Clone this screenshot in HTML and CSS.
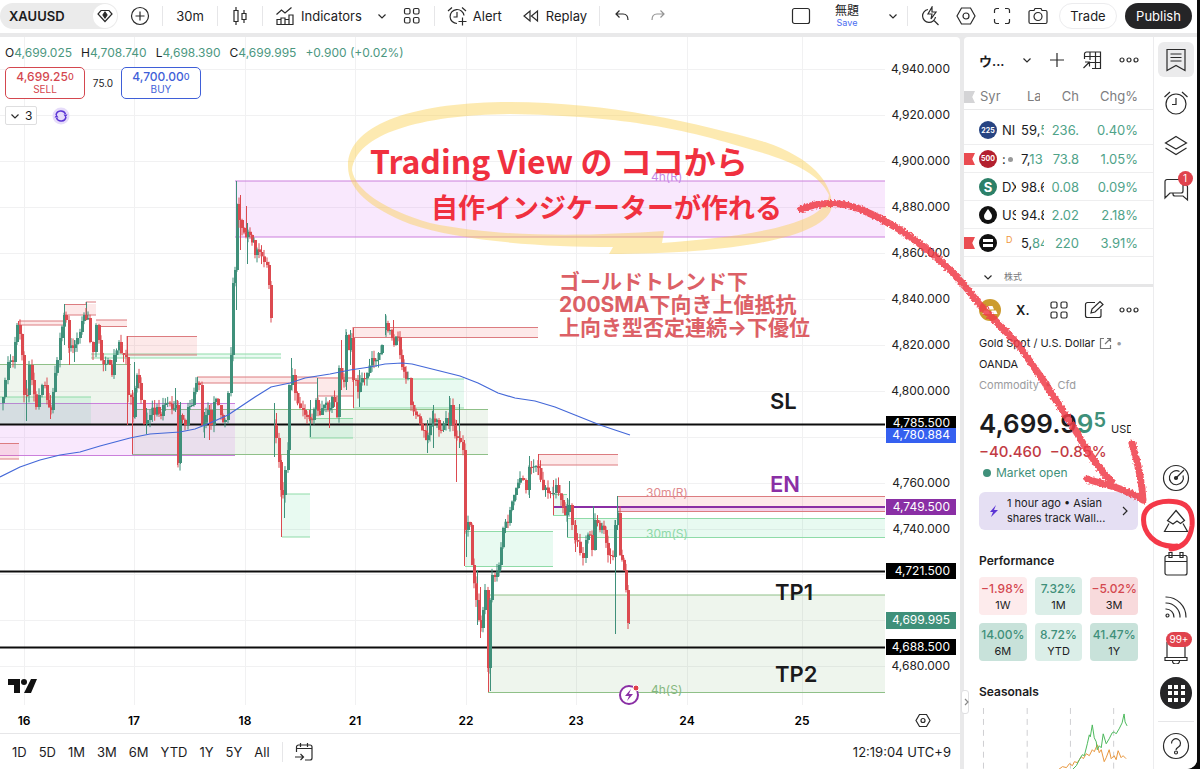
FILE: index.html
```html
<!DOCTYPE html>
<html lang="en">
<head>
    <meta charset="UTF-8">
    <meta name="viewport" content="width=device-width, initial-scale=1.0">
    <title>XAUUSD 4,699.995</title>
    <link rel="stylesheet" href="styles.css">
</head>
<body>
<div class="app">
    <header class="toolbar">
        <div class="symbol">
            <button class="symbol-name">XAUUSD</button>
            <button class="symbol-badge" aria-label="Plan">
                <svg class="icon" width="18" height="18" viewBox="0 0 18 18"><path d="M5 3.500h8l3 3.500-7 7.500L2 7z"/><path d="M9 5l2 3-2 3-2-3z" fill="#2a2a2a"/></svg>
            </button>
        </div>
        <button class="tool add" aria-label="Compare">
            <svg class="icon" width="20" height="20" viewBox="0 0 20 20"><circle cx="10" cy="10" r="8.500"/><path d="M10 5.500v9M5.500 10h9"/></svg>
        </button>
        <span class="sep"></span>
        <button class="tool interval">30m</button>
        <span class="sep"></span>
        <button class="tool style" aria-label="Candles">
            <svg class="icon" width="16" height="20" viewBox="0 0 16 20"><path d="M2 4.500h4v11H2zM4 1v3.500M4 15.500V19M10 7.500h4v6h-4zM12 4v3.500M12 13.500V17"/></svg>
        </button>
        <span class="sep"></span>
        <button class="tool indicators">
            <svg class="icon" width="20" height="20" viewBox="0 0 20 20"><path d="M2 18.500v-5h4v5zM6 18.500V12h4v6.500zM10 18.500v-5h4v5zM14 18.500V9h4v9.500zM1.500 8.500l5-4.500 3.500 3 6.500-5.500"/></svg>
            Indicators
        </button>
        <button class="tool chev" aria-label="Favorites">
            <svg class="icon" width="10" height="10" viewBox="0 0 10 10"><path d="M1.500 3.500L5 7l3.500-3.500"/></svg>
        </button>
        <button class="tool layouts" aria-label="Templates">
            <svg class="icon" width="18" height="18" viewBox="0 0 18 18"><rect x="1.500" y="1.500" width="5.500" height="5.500" rx="1.500"/><rect x="10.500" y="1.500" width="5.500" height="5.500" rx="1.500"/><rect x="1.500" y="10.500" width="5.500" height="5.500" rx="1.500"/><rect x="10.500" y="10.500" width="5.500" height="5.500" rx="1.500"/></svg>
        </button>
        <span class="sep"></span>
        <button class="tool alert">
            <svg class="icon" width="20" height="20" viewBox="0 0 20 20"><path d="M17 9.500A7 7 0 1 0 10 17.500M10 6v5H6.500M1 5l4-3.500M19 5l-4-3.500M15.500 11.500v8M11.500 15.500h8"/></svg>
            Alert
        </button>
        <button class="tool replay">
            <svg class="icon" width="18" height="18" viewBox="0 0 18 18"><path d="M8 4v10L2 9zM15.500 4v10l-6-5z"/></svg>
            Replay
        </button>
        <span class="sep"></span>
        <button class="tool undo" aria-label="Undo">
            <svg class="icon" width="16" height="16" viewBox="0 0 16 16"><path d="M5.500 2.500L2 6l3.500 3.500M2 6h7c3 0 5 2 5 6"/></svg>
        </button>
        <button class="tool redo" aria-label="Redo">
            <svg class="icon" width="16" height="16" viewBox="0 0 16 16"><path d="M10.500 2.500L14 6l-3.500 3.500M14 6H7c-3 0-5 2-5 6"/></svg>
        </button>
        <div class="toolbar-right">
            <button class="tool" aria-label="Layout setup">
                <svg class="icon" width="20" height="20" viewBox="0 0 20 20"><rect x="1.500" y="2.500" width="17" height="15" rx="2"/></svg>
            </button>
            <button class="save"><span class="save-name">無題</span><span class="save-link">Save</span></button>
            <button class="tool manage" aria-label="Manage layouts">
                <svg class="icon" width="10" height="10" viewBox="0 0 10 10"><path d="M1.500 3.500L5 7l3.500-3.500"/></svg>
            </button>
            <span class="sep"></span>
            <button class="tool quick" aria-label="Quick search">
                <svg class="icon" width="20" height="20" viewBox="0 0 20 20"><path d="M8 3.500A6.500 6.500 0 1 0 15.500 11M13.500 14l5 5M12 1L8 8h4l-1 5 5-7h-4z"/></svg>
            </button>
            <button class="tool" aria-label="Settings">
                <svg class="icon" width="20" height="20" viewBox="0 0 20 20"><path d="M5.500 2h9l4.500 8-4.500 8h-9L1 10z"/><circle cx="10" cy="10" r="3"/></svg>
            </button>
            <button class="tool" aria-label="Fullscreen">
                <svg class="icon" width="20" height="20" viewBox="0 0 20 20"><path d="M2.500 7V4.500a2 2 0 0 1 2-2H7M13 2.500h2.500a2 2 0 0 1 2 2V7M17.500 13v2.500a2 2 0 0 1-2 2H13M7 17.500H4.500a2 2 0 0 1-2-2V13"/></svg>
            </button>
            <button class="tool" aria-label="Snapshot">
                <svg class="icon" width="20" height="20" viewBox="0 0 20 20"><path d="M2.500 4.500H6l1-2h6l1 2h3.500a1.500 1.500 0 0 1 1.500 1.500v10a1.500 1.500 0 0 1-1.500 1.500h-15A1.500 1.500 0 0 1 1 16V6a1.500 1.500 0 0 1 1.500-1.500z"/><circle cx="10" cy="10.500" r="4"/></svg>
            </button>
            <button class="trade">Trade</button>
            <button class="publish">Publish</button>
        </div>
    </header>

    <main class="workspace">
        <section class="chart-area">
            <div class="chart">
                <svg class="plot" viewBox="0 37 960 696" preserveAspectRatio="xMinYMin meet">
                    <g id="grid" class="grid"></g>
                    <!-- support / resistance zones -->
                    <g class="zone olive">
                        <rect x="0" y="364" width="131" height="60"/><path d="M0 364.500h131"/>
                        <rect x="132" y="409" width="356" height="45"/><path d="M132 409.500h356M132 454.500h356M132.500 409v45"/>
                        <rect x="488" y="595" width="397" height="97"/><path d="M488 595h397M488 692.500h397"/>
                    </g>
                    <g class="zone violet">
                        <rect x="0" y="403" width="235" height="52"/><path d="M0 403.500h235M0 455.500h235"/>
                        <rect x="235" y="181" width="650" height="56"/><path d="M235 181h650M235 237h650"/>
                    </g>
                    <g class="zone green">
                        <rect x="0" y="397" width="91" height="27"/><path d="M0 397h91"/>
                        <rect x="91" y="354" width="190" height="4"/><path d="M91 354h190M91 358h190"/>
                        <rect x="282" y="494" width="28" height="43"/><path d="M282 494h28M282 537h28"/>
                        <rect x="310" y="418" width="43" height="20"/><path d="M310 418.500h43M310 438h43M310 418v20"/>
                        <rect x="353" y="379" width="111" height="29"/><path d="M353 379h111M353 408h111"/>
                        <rect x="465" y="531" width="88" height="35"/><path d="M465 531.500h88M465 566.500h88"/>
                        <rect x="553" y="494" width="14" height="21"/><path d="M553 494.500h14M553 515.500h14"/>
                        <rect x="567" y="518" width="318" height="19"/><path d="M567 518.500h318M567 537.500h318"/>
                    </g>
                    <g class="zone red">
                        <rect x="19" y="321" width="45" height="4"/><path d="M19 321h45M19 325h45"/>
                        <rect x="64" y="304" width="32" height="11"/><path d="M64 304.500h22V302h10M64 315h32"/>
                        <rect x="96" y="320" width="31" height="6"/><path d="M96 320h31M96 326.500h31"/>
                        <rect x="127" y="336" width="70" height="19"/><path d="M127 336.500h70M127 355h70M127 336v19"/>
                        <rect x="0" y="443" width="19" height="16"/><path d="M0 443.500h19M0 459h19"/>
                        <rect x="197" y="377" width="120" height="6"/><path d="M197 377h120M197 383h120"/>
                        <rect x="317" y="377" width="36" height="19"/><path d="M317 378h36M317 396h36"/>
                        <rect x="353" y="327" width="185" height="10"/><path d="M353 327.500h185M353 337.500h185M353 327v10"/>
                        <rect x="538" y="454" width="80" height="11"/><path d="M538 454.500h80M538 465h80"/>
                        <rect x="617" y="496" width="268" height="16"/><path d="M617 496.500h268M617 511.500h268"/>
                    </g>
                    <path class="level" d="M0 424.500h885M0 571.500h885M0 647.500h885"/>
                    <path class="entry-fill" d="M618 507h267v4H618z"/>
                    <path class="entry" d="M553 507h332"/>
                    <g id="candles"></g>
                    <polyline class="sma" points="0,477 20,467 40,460 60,455 80,452 100,446 130,438 150,434 180,432 195,429 210,423 228,415 240,407 255,397 271,387 290,383 305,378 330,374 350,370 370,367 385,364 402,363 412,364 440,371 460,376 478,383 498,393 515,398 535,401 555,407 580,417 600,425 618,431 630,435"/>
                    <g class="zone-label">
                        <text class="t-violet" x="651" y="181">4h(R)</text>
                        <text class="t-red" x="646" y="497">30m(R)</text>
                        <text class="t-green" x="646" y="538">30m(S)</text>
                        <text class="t-olive" x="651" y="694">4h(S)</text>
                    </g>
                    <g class="mark">
                        <text x="770" y="409">SL</text>
                        <text class="t-entry" x="770" y="492">EN</text>
                        <text x="775" y="600">TP1</text>
                        <text x="775" y="682">TP2</text>
                    </g>
                    <g class="memo">
                        <text x="559" y="289">ゴールドトレンド下</text>
                        <text x="559" y="312">200SMA下向き上値抵抗</text>
                        <text x="559" y="335">上向き型否定連続→下優位</text>
                    </g>
                    <g class="event">
                        <circle cx="629" cy="695" r="9"/>
                        <path d="M631 689l-6 7h4l-2 5 6-7h-4z"/>
                        <circle class="event-dot" cx="636" cy="688" r="3"/>
                    </g>
                    <path class="tv-logo" d="M8 679h12v14h-6v-8H8zM31 679h6l-6 14h-7z"/>
                    <circle class="tv-logo" cx="24" cy="682" r="3"/>
                    <g id="prices" class="axis"></g>
                    <g class="price-tag">
                        <rect class="f-black" x="886" y="416" width="70" height="16"/><text x="950" y="427">4,785.500</text>
                        <rect class="f-blue" x="886" y="428" width="70" height="15"/><text x="950" y="439">4,780.884</text>
                        <rect class="f-purple" x="886" y="499" width="70" height="16"/><text x="950" y="511">4,749.500</text>
                        <rect class="f-black" x="886" y="563" width="70" height="16"/><text x="950" y="575">4,721.500</text>
                        <rect class="f-green" x="886" y="612" width="70" height="17"/><text x="950" y="624">4,699.995</text>
                        <rect class="f-black" x="886" y="639" width="70" height="16"/><text x="950" y="651">4,688.500</text>
                    </g>
                    <g id="days" class="days"></g>
                    <g class="axis-gear"><path d="M919.500 714.500h7l3.500 6-3.500 6h-7l-3.500-6z"/><circle cx="923" cy="720.500" r="2"/></g>
                </svg>
                <div class="legend">
                    <div class="ohlc">
                        <span>O<b>4,699.025</b></span><span>H<b>4,708.740</b></span><span>L<b>4,698.390</b></span><span>C<b>4,699.995</b></span><b>+0.900 (+0.02%)</b>
                    </div>
                    <div class="order">
                        <button class="sell"><strong>4,699.25<small>0</small></strong>SELL</button>
                        <span class="spread">75.0</span>
                        <button class="buy"><strong>4,700.00<small>0</small></strong>BUY</button>
                    </div>
                    <div class="studies">
                        <button class="study-count"><svg class="icon" width="10" height="10" viewBox="0 0 10 10"><path d="M1.500 3.500L5 7l3.500-3.500"/></svg>3</button>
                        <svg class="sync" width="18" height="18" viewBox="0 0 18 18"><circle class="sync-bg" cx="9" cy="9" r="8.500"/><path d="M4 8a5 5 0 0 1 9.500-1M14 10a5 5 0 0 1-9.500 1"/><path class="sync-tip" d="M11.500 7.500h4l-2 3zM6.500 10.500h-4l2-3z"/></svg>
                    </div>
                </div>
            </div>
            <footer class="ranges">
                <button>1D</button><button>5D</button><button>1M</button><button>3M</button><button>6M</button><button>YTD</button><button>1Y</button><button>5Y</button><button>All</button>
                <span class="sep"></span>
                <button class="goto" aria-label="Go to date">
                    <svg class="icon" width="20" height="20" viewBox="0 0 20 20"><path d="M2.500 10V5a2 2 0 0 1 2-2h11.500a2 2 0 0 1 2 2v11a2 2 0 0 1-2 2H11M2.500 6.500H18M6.500 1v4M13.500 1v4M1 15h8M6.500 12l3 3-3 3"/></svg>
                </button>
                <button class="clock">12:19:04 UTC+9</button>
            </footer>
        </section>

        <aside class="panel">
            <button class="collapse" aria-label="Collapse"><svg class="icon" width="5" height="8" viewBox="0 0 5 8"><path d="M1 1l3 3-3 3"/></svg></button>
            <div class="panel-head watch-head">
                <button class="list-name">ウ...</button>
                <button aria-label="Lists"><svg class="icon" width="10" height="10" viewBox="0 0 10 10"><path d="M1.500 3.500L5 7l3.500-3.500"/></svg></button>
                <button aria-label="Add symbol"><svg class="icon" width="16" height="16" viewBox="0 0 16 16"><path d="M8 1v14M1 8h14"/></svg></button>
                <button aria-label="Advanced view"><svg class="icon" width="20" height="20" viewBox="0 0 20 20"><path d="M2.500 9V4a2 2 0 0 1 2-2h14v16.500H10M2.500 6.500h16M8 2v8M13.500 2v16.500M8 12.500h10.500M1.500 18l6-6M3 12h4.500v4.500"/></svg></button>
                <button aria-label="More"><svg class="icon" width="20" height="8" viewBox="0 0 20 8"><circle cx="3" cy="4" r="2"/><circle cx="10" cy="4" r="2"/><circle cx="17" cy="4" r="2"/></svg></button>
            </div>
            <table class="watchlist">
                <colgroup><col class="c-logo"><col class="c-sym"><col class="c-last"><col class="c-chg"><col></colgroup>
                <thead>
                    <tr><th colspan="2"><i class="flag"></i><span class="h-sym">Syr</span></th><th><span class="h-last">La</span></th><th class="num">Ch</th><th class="num">Chg%</th></tr>
                </thead>
                <tbody>
                    <tr><td><span class="logo navy">225</span></td><td>NI</td><td>59,<em>5</em></td><td class="num up">236.</td><td class="num up">0.40%</td></tr>
                    <tr><td><i class="flag"></i><span class="logo crimson">500</span></td><td>:<i class="dot"></i></td><td>7,<em>13</em></td><td class="num up">73.8</td><td class="num up">1.05%</td></tr>
                    <tr><td><span class="logo teal">S</span></td><td>DX</td><td>98.6</td><td class="num up">0.08</td><td class="num up">0.09%</td></tr>
                    <tr><td><span class="logo black"><svg width="8" height="11" viewBox="0 0 8 11"><path d="M4 0c2 3 4 5 4 7a4 4 0 0 1-8 0c0-2 2-4 4-7z"/></svg></span></td><td>US</td><td>94.8</td><td class="num up">2.02</td><td class="num up">2.18%</td></tr>
                    <tr><td><i class="flag"></i><span class="logo black"><svg width="10" height="8" viewBox="0 0 10 8"><path d="M0 0h10v3H0zM0 5h10v3H0z"/></svg></span></td><td><sup>D</sup></td><td>5,<em>84</em></td><td class="num up">220</td><td class="num up">3.91%</td></tr>
                </tbody>
            </table>
            <button class="group"><svg class="icon" width="10" height="10" viewBox="0 0 10 10"><path d="M1.500 3.500L5 7l3.500-3.500"/></svg>株式</button>

            <div class="details">
                <div class="panel-head detail-head">
                    <svg width="22" height="22" viewBox="0 0 22 22"><circle cx="11" cy="11" r="11" fill="#cc9c2f"/><path d="M8.500 7h5l1.500 3.500H7zM5 11.500h4.500L11 15H3.500zM12.500 11.500H17l1.500 3.500h-7z" fill="#fff"/></svg>
                    <button class="ticker">X.</button>
                    <button aria-label="Widgets"><svg class="icon" width="20" height="20" viewBox="0 0 20 20"><rect x="2" y="2" width="6" height="6" rx="1.500"/><rect x="12" y="2" width="6" height="6" rx="1.500"/><rect x="2" y="12" width="6" height="6" rx="1.500"/><rect x="12" y="12" width="6" height="6" rx="1.500"/></svg></button>
                    <button aria-label="Note"><svg class="icon" width="20" height="20" viewBox="0 0 20 20"><path d="M11 2.500H3.500a2 2 0 0 0-2 2v11a2 2 0 0 0 2 2h11.500a2 2 0 0 0 2-2V9M7 13l1-4 8-7.500 3 3-8 7.500z"/></svg></button>
                    <button aria-label="More"><svg class="icon" width="20" height="8" viewBox="0 0 20 8"><circle cx="3" cy="4" r="2"/><circle cx="10" cy="4" r="2"/><circle cx="17" cy="4" r="2"/></svg></button>
                </div>
                <p class="name">Gold Spot / U.S. Dollar <a href="#" aria-label="Open symbol"><svg class="icon" width="13" height="13" viewBox="0 0 13 13"><path d="M5 1.500H1.500v10h10V8M8 1.500h3.500V5M11.500 1.500L6 7"/></svg></a> <span class="muted">•</span></p>
                <p class="name">OANDA</p>
                <p class="name muted">Commodity&nbsp; • &nbsp;Cfd</p>
                <div class="quote">4,699.9<span class="tick">9<small>5</small></span><span class="cur">USD</span></div>
                <div class="change"><span>−40.460</span><span>−0.85%</span></div>
                <div class="status">Market open</div>
                <a class="news" href="#">
                    <svg width="10" height="12" viewBox="0 0 10 12"><path d="M7 0L1 7h3L2 12l7-7H5z"/></svg>
                    <span>1 hour ago • Asian shares track Wall...</span>
                    <svg class="icon" width="6" height="10" viewBox="0 0 6 10"><path d="M1 1l4 4-4 4"/></svg>
                </a>
                <h3>Performance</h3>
                <div class="perf">
                    <div class="loss"><b>−1.98%</b>1W</div>
                    <div class="gain"><b>7.32%</b>1M</div>
                    <div class="loss deep"><b>−5.02%</b>3M</div>
                    <div class="gain deep"><b>14.00%</b>6M</div>
                    <div class="gain"><b>8.72%</b>YTD</div>
                    <div class="gain deep"><b>41.47%</b>1Y</div>
                </div>
                <h3 class="seasonal-title">Seasonals</h3>
                <svg class="seasonals" viewBox="0 0 160 64">
                    <path class="dash" d="M4.500 0v64M48.500 0v64M92 0v64M135.500 0v64"/>
                    <polyline class="s-orange" points="80,62 84,59 88,60 91,56 94,58 96,54 99,55 103,49 105,51 108,46 111,48 114,42 116,44 119,37 121,45 123,42 126,54 128,50 131,42 133,51 136,48 138,52 140,43 143,50 145,48 148,51"/>
                    <polyline class="s-green" points="94,62 98,58 101,52 104,47 106,48 109,36 111,27 112,29 114,17 116,30 118,34 119,42 121,38 123,40 125,26 128,36 131,31 134,25 136,24 138,26 141,21 144,15 146,6 147,14 149,18"/>
                </svg>
            </div>
        </aside>

        <nav class="rail">
            <button class="active" aria-label="Watchlist"><svg class="icon" width="22" height="24" viewBox="0 0 22 24"><path d="M2 1.500h18v21l-9-5-9 5zM5.500 6h11M5.500 9.500h11M5.500 13h11"/></svg></button>
            <button aria-label="Alerts"><svg class="icon" width="26" height="26" viewBox="0 0 26 26"><circle cx="13" cy="14" r="10"/><path d="M13 8v6.500H9M1.500 7L7 2M24.500 7L19 2"/></svg></button>
            <button aria-label="Object tree"><svg class="icon" width="24" height="22" viewBox="0 0 24 22"><path d="M12 1.500l10.500 6.500L12 14 1.500 8zM1.500 13L12 19.500 22.500 13"/></svg></button>
            <button aria-label="Chats"><svg class="icon" width="26" height="26" viewBox="0 0 26 26"><path d="M4 3.500h14a2 2 0 0 1 2 2V15a2 2 0 0 1-2 2H7l-5 5V5.500a2 2 0 0 1 2-2zM10 17v1a2 2 0 0 0 2 2h8l4.500 4V11a2 2 0 0 0-2-2H20"/></svg><span class="badge">1</span></button>
            <span class="spacer"></span>
            <button aria-label="Screeners"><svg class="icon" width="28" height="28" viewBox="0 0 28 28"><circle cx="14" cy="14" r="12.500"/><path d="M17.500 7.500a7 7 0 1 0 3.500 4M22 6l-8 8"/><circle cx="14" cy="14" r="1.500" fill="#2a2a2a"/></svg></button>
            <button aria-label="Pine editor"><svg class="icon" width="26" height="26" viewBox="0 0 26 26"><path d="M13 2.500l8.500 10-4 3-3.500-2.500-4 3-5.500-3.500zM6 15.500L1.500 23.500h23L20 15.500"/></svg></button>
            <button aria-label="Calendar"><svg class="icon" width="26" height="26" viewBox="0 0 26 26"><path d="M4 4.500h18a2 2 0 0 1 2 2V22a2 2 0 0 1-2 2H4a2 2 0 0 1-2-2V6.500a2 2 0 0 1 2-2zM2 10.500h22M6 1.500h3v5H6zM17 1.500h3v5h-3z"/></svg></button>
            <button aria-label="News"><svg class="icon" width="24" height="24" viewBox="0 0 24 24"><circle cx="3.500" cy="20.500" r="1.500"/><path d="M1.500 14a8 8 0 0 1 8.500 8.500M1.500 8A14 14 0 0 1 16 22.500M1.500 2A20 20 0 0 1 22 22.500"/></svg></button>
            <button aria-label="Notifications"><svg class="icon" width="26" height="28" viewBox="0 0 26 28"><path d="M4 6v15M22 6v15M2 21.500h22v3H2zM9.500 25a3.500 3 0 0 0 7 0"/></svg><span class="badge wide">99+</span></button>
            <button aria-label="Products"><svg width="32" height="32" viewBox="0 0 32 32"><circle cx="16" cy="16" r="16" fill="#252527"/><path d="M8 8h4v4H8zM14 8h4v4h-4zM21 8h4v4h-4zM8 14h4v4H8zM14 14h4v4h-4zM21 14h4v4h-4zM8 21h4v4H8zM14 21h4v4h-4zM21 21h4v4h-4z" fill="#fff"/></svg></button>
            <button class="help" aria-label="Help"><svg class="icon" width="28" height="28" viewBox="0 0 28 28"><circle cx="14" cy="14" r="12.500"/><path d="M9.500 11.500a4.500 4.500 0 1 1 7 3.500c-1.500 1-2.500 1.500-2.500 3"/><circle cx="14" cy="20.500" r="1.500"/></svg></button>
        </nav>
    </main>

    <!-- pen notes over the whole screen -->
    <svg class="notes" viewBox="0 0 1200 769" preserveAspectRatio="xMinYMin meet">
        <defs>
            <filter id="crayon" x="-5%" y="-5%" width="110%" height="110%">
                <feTurbulence type="fractalNoise" baseFrequency="0.5" numOctaves="2" seed="4"/>
                <feDisplacementMap in="SourceGraphic" scale="4" xChannelSelector="R" yChannelSelector="G"/>
            </filter>
        </defs>
        <path class="marker" fill-rule="evenodd" d="M348 166C348 122 420 102 510 102C610 102 700 124 765 142C812 158 832 182 832 206C828 238 730 254 609 254L613 247C540 247 460 241 410 224C370 208 348 190 348 166zM352 170C355 190 385 210 430 223C500 238 590 236 664 231L662 243C740 237 826 226 829 195C818 172 790 160 742 147C680 128 620 116 510 114C420 115 356 134 352 170z"/>
        <g class="pen">
            <text class="pen-1" x="370" y="174">Trading View の ココから</text>
            <text class="pen-2" x="431" y="218">自作インジケーターが作れる</text>
        </g>
        <path class="crayon" filter="url(#crayon)" d="M801 209C820 202 838 201 860 209C905 228 945 258 980 305L1017 343L1043 380L1077 433Q1095 465 1111 481M1087 479C1105 485 1125 488 1143 500C1142 478 1137 460 1132 443"/>
        <path class="ring" d="M1177 546C1155 548 1141 532 1144 515C1148 502 1165 500 1177 502C1190 504 1193 515 1192 526C1190 540 1184 547 1171 549"/>
    </svg>
</div>
<script src="chart.js"></script>
</body>
</html>
```
FILE: styles.css
```css
* {
    box-sizing: border-box;
}
body {
    margin: 0;
    background: #0b0b0b;
    color: #1c1c1e;
    font-family: Inter, "Noto Sans CJK JP", sans-serif;
    font-size: 12px;
}
button {
    background: none;
    border: none;
    padding: 0;
    color: inherit;
    font: inherit;
    cursor: pointer;
}
svg {
    display: block;
    flex: none;
}
.icon {
    fill: none;
    stroke: #2a2a2a;
    stroke-width: 1.2;
}
.app {
    display: flex;
    flex-direction: column;
    height: 100vh;
    margin-right: 3px;
    background: #e9e9ea;
    border-radius: 0 0 10px 0;
    overflow: hidden;
    position: relative;
}

/* top toolbar */
.toolbar {
    display: flex;
    align-items: center;
    height: 33px;
    padding-bottom: 2px;
    margin-bottom: 4px;
    background: #fff;
    font-size: 13px;
    flex: none;
}
.symbol {
    display: flex;
    align-items: center;
    justify-content: space-between;
    width: 118px;
    height: 26px;
    padding: 0 1px 0 9px;
    background: #ebebeb;
    border-radius: 13px;
}
.symbol-name {
    font-size: 13px;
    font-weight: 600;
}
.symbol-badge {
    display: flex;
    align-items: center;
    justify-content: center;
    width: 24px;
    height: 24px;
    border-radius: 50%;
    background: #fff;
}
.tool {
    display: flex;
    align-items: center;
    justify-content: center;
    gap: 6px;
    min-width: 20px;
}
.sep {
    width: 1px;
    height: 20px;
    background: #e6e6e8;
    flex: none;
}
.add {
    margin: 0 12px;
}
.interval {
    width: 54px;
}
.style {
    width: 44px;
}
.indicators {
    margin-left: 12px;
}
.chev {
    margin-left: 10px;
}
.layouts {
    margin: 0 12px 0 10px;
}
.alert {
    margin-left: 12px;
}
.replay {
    margin: 0 12px 0 20px;
}
.undo {
    margin-left: 12px;
}
.redo {
    margin-left: 16px;
    opacity: 0.5;
}
.toolbar-right {
    display: flex;
    align-items: center;
    gap: 16px;
    margin-left: auto;
    padding-right: 5px;
}
.save {
    display: flex;
    flex-direction: column;
    align-items: center;
    width: 40px;
    padding-top: 3px;
    line-height: 12px;
}
.save-name {
    font-size: 12px;
}
.save-link {
    font-size: 9px;
    color: #4a6cf0;
}
.manage {
    margin-right: -12px;
}
.quick {
    margin-left: -4px;
}
.trade,
.publish {
    height: 26px;
    border-radius: 13px;
    font-size: 13px;
}
.trade {
    width: 58px;
    margin: 0 -8px 0 -5px;
    border: 1px solid #ececee;
}
.publish {
    width: 67px;
    background: #252527;
    color: #fff;
}

.workspace {
    display: flex;
    flex: 1;
    min-height: 0;
}

/* chart */
.chart-area {
    display: flex;
    flex-direction: column;
    flex: 1;
    min-width: 0;
    margin-right: 4px;
    background: #fff;
    border-radius: 0 4px 0 0;
}
.chart {
    position: relative;
    flex: 1;
    min-height: 0;
}
.plot {
    width: 100%;
    height: 100%;
}
.grid {
    stroke: #f1f1f2;
}
.zone path {
    fill: none;
    stroke-width: 1;
}
.olive rect { fill: rgba(90, 160, 80, 0.1); }
.olive path { stroke: #8fc088; }
.violet rect { fill: rgba(215, 100, 240, 0.15); }
.violet path { stroke: #cb7fdc; }
.green rect { fill: rgba(50, 205, 130, 0.11); }
.green path { stroke: #8fdba8; }
.red rect { fill: rgba(235, 70, 70, 0.12); }
.red path { stroke: #dc7c80; }
.level {
    stroke: #0c0c0c;
    stroke-width: 2;
}
.entry {
    stroke: #8a2fa5;
    stroke-width: 2;
}
.entry-fill {
    fill: rgba(180, 70, 220, 0.15);
}
.sma {
    fill: none;
    stroke: #4468d8;
    stroke-width: 1.2;
}
.wick-up { stroke: #3f907a; }
.wick-down { stroke: #dc4a50; }
.body-up { fill: #3f907a; }
.body-down { fill: #dc4a50; }
.zone-label {
    font-size: 12px;
}
.t-violet { fill: #c585e6; }
.t-red { fill: #e08a8e; }
.t-green { fill: #8fd8a8; }
.t-olive { fill: #86b880; }
.mark {
    font-size: 22px;
    font-weight: 600;
    fill: #1a1a1c;
}
.mark .t-entry {
    fill: #8a2fa5;
}
.memo {
    font-size: 21px;
    font-weight: 700;
    fill: #dc6066;
}
.event circle {
    fill: #fff;
    stroke: #8a2fa5;
    stroke-width: 2;
}
.event path {
    fill: #8a2fa5;
}
.event .event-dot {
    fill: #e0404a;
    stroke: #fff;
    stroke-width: 1;
}
.tv-logo {
    fill: #111;
}
.axis text,
.price-tag text {
    font-size: 12px;
    text-anchor: end;
}
.axis {
    fill: #222;
}
.price-tag text {
    fill: #fff;
}
.f-black { fill: #000; }
.f-blue { fill: #3560f0; }
.f-purple { fill: #8a2fa5; }
.f-green { fill: #3f907a; }
.days {
    font-size: 12px;
    font-weight: 600;
    text-anchor: middle;
}
.axis-gear {
    fill: none;
    stroke: #2a2a2a;
    stroke-width: 1.2;
}
.legend {
    position: absolute;
    top: 8px;
    left: 5px;
}
.ohlc {
    display: flex;
    gap: 9px;
    font-size: 12px;
    line-height: 16px;
}
.ohlc b {
    font-weight: 400;
    color: #4c977f;
}
.order {
    display: flex;
    align-items: center;
    margin-top: 6px;
}
.sell,
.buy {
    width: 80px;
    height: 32px;
    border: 1px solid;
    border-radius: 5px;
    background: #fff;
    font-size: 10px;
    line-height: 13px;
}
.sell strong,
.buy strong {
    display: block;
    font-size: 12px;
    font-weight: 500;
}
.sell small,
.buy small {
    font-size: 9px;
    vertical-align: 1px;
}
.sell { color: #d4474f; }
.buy { color: #3f5fd8; }
.spread {
    width: 36px;
    text-align: center;
    font-size: 10px;
}
.studies {
    display: flex;
    align-items: center;
    gap: 15px;
    margin-top: 7px;
}
.study-count {
    display: flex;
    align-items: center;
    gap: 5px;
    height: 19px;
    padding: 0 4px;
    border: 1px solid #dededf;
    border-radius: 2px;
    background: #fff;
}
.sync {
    fill: none;
    stroke: #5b35d5;
    stroke-width: 1.5;
}
.sync .sync-bg {
    fill: #e6dcfa;
    stroke: none;
}
.sync .sync-tip {
    fill: #5b35d5;
    stroke: none;
}
.ranges {
    display: flex;
    align-items: center;
    gap: 12px;
    height: 36px;
    padding: 0 9px 0 12px;
    border-top: 1px solid #e6e6e8;
    font-size: 13px;
    flex: none;
}
.goto {
    margin-left: -1px;
}
.clock {
    margin-left: auto;
}

/* watchlist and details */
.panel {
    position: relative;
    width: 190px;
    flex: none;
    background: #fff;
    border-right: 1px solid #ececee;
    border-radius: 4px 0 0 0;
}
.collapse {
    position: absolute;
    left: -3px;
    top: 653px;
    width: 8px;
    height: 24px;
    padding-left: 2px;
    background: #fff;
    border: 1px solid #e0e0e2;
    border-radius: 3px;
}
.collapse .icon {
    stroke: #888;
}
.panel-head {
    display: flex;
    align-items: center;
    justify-content: space-between;
    height: 46px;
    padding: 0 14px 0 15px;
}
.list-name,
.ticker {
    font-size: 13px;
    font-weight: 600;
}
.ticker {
    margin-right: 4px;
}
.watchlist {
    width: 100%;
    table-layout: fixed;
    border-collapse: collapse;
    font-size: 13px;
}
.c-logo { width: 38px; }
.c-sym { width: 14px; }
.c-last { width: 28px; }
.c-chg { width: 35px; }
.watchlist th {
    height: 26px;
    padding: 0;
    border-bottom: 1px solid #e9e9ea;
    color: #7d7d80;
    font-weight: 400;
    text-align: left;
    position: relative;
}
.watchlist thead::after {
    content: "";
    display: block;
    height: 7px;
}
.watchlist td {
    height: 28px;
    padding: 0;
    border-bottom: 1px solid #eeeeef;
    overflow: hidden;
    white-space: nowrap;
    position: relative;
}
.watchlist td:nth-child(3) {
    padding-left: 5px;
}
.watchlist .num {
    text-align: right;
}
.watchlist .num:last-child {
    padding-right: 15px;
}
.watchlist em {
    font-style: normal;
    color: #4fa389;
}
.watchlist .up {
    color: #4fa389;
}
.h-sym {
    display: block;
    width: 21px;
    margin-left: 16px;
    overflow: hidden;
}
.h-last {
    display: block;
    width: 13px;
    margin-left: 11px;
    overflow: hidden;
}
.flag {
    position: absolute;
    left: 0;
    top: 8px;
    width: 11px;
    height: 12px;
    background: #ea4c51;
    clip-path: polygon(0 0, 100% 0, 75% 50%, 100% 100%, 0 100%);
}
th .flag {
    background: #d4d4d6;
}
.dot {
    display: inline-block;
    width: 5px;
    height: 5px;
    margin-left: 2px;
    border-radius: 50%;
    background: #999;
    vertical-align: 2px;
}
.watchlist sup {
    padding-left: 4px;
    color: #f0963c;
    font-size: 9px;
}
.logo {
    display: flex;
    align-items: center;
    justify-content: center;
    width: 18px;
    height: 18px;
    margin-left: 15px;
    border-radius: 50%;
    color: #fff;
    fill: #fff;
    font-size: 7px;
    font-weight: 700;
}
.navy { background: #274482; }
.crimson { background: #b3202e; }
.teal {
    background: #2c8068;
    font-size: 13px;
}
.black { background: #111; }
.group {
    display: flex;
    align-items: center;
    gap: 11px;
    width: 100%;
    height: 27px;
    padding: 12px 0 0 19px;
    color: #77777a;
    font-size: 9px;
}
.details {
    padding: 0 15px;
    border-top: 3px solid #e6e6e7;
}
.detail-head {
    padding: 0;
    margin-right: -1px;
}
.name {
    display: flex;
    align-items: center;
    gap: 4px;
    margin: 0;
    font-size: 11px;
    line-height: 21px;
    white-space: nowrap;
}
.name .icon {
    stroke: #777;
}
.muted {
    color: #9b9b9e;
}
.quote {
    display: flex;
    align-items: baseline;
    margin-top: 6px;
    overflow: hidden;
    font-size: 26px;
    font-weight: 600;
    line-height: 36px;
    white-space: nowrap;
}
.tick {
    color: #3f907a;
}
.tick small {
    font-size: 20px;
    vertical-align: 6px;
}
.cur {
    width: 20px;
    margin-left: 5px;
    overflow: hidden;
    font-size: 11px;
    font-weight: 400;
    line-height: 14px;
}
.change {
    display: flex;
    gap: 8px;
    color: #c23a44;
    font-size: 15px;
    font-weight: 500;
    line-height: 20px;
}
.status {
    display: flex;
    align-items: center;
    gap: 5px;
    padding-left: 4px;
    color: #3f907a;
    font-size: 12px;
    line-height: 22px;
}
.status::before {
    content: "";
    width: 8px;
    height: 8px;
    border-radius: 50%;
    background: #3f907a;
}
.news {
    display: flex;
    align-items: center;
    gap: 8px;
    height: 38px;
    margin-top: 8px;
    padding: 0 10px;
    border-radius: 6px;
    background: #e5dff3;
    color: #1c1c1e;
    fill: #5b35d5;
    font-size: 11px;
    line-height: 15px;
    text-decoration: none;
}
.news span {
    flex: 1;
}
h3 {
    margin: 22px 0 7px;
    font-size: 12px;
    font-weight: 600;
    line-height: 18px;
}
.perf {
    display: grid;
    grid-template-columns: repeat(3, 1fr);
    gap: 8px;
}
.perf div {
    height: 38px;
    padding-top: 4px;
    border-radius: 4px;
    text-align: center;
    font-size: 11px;
    line-height: 16px;
}
.perf b {
    display: block;
    font-size: 12px;
    font-weight: 500;
}
.loss { background: #fdebec; }
.loss.deep { background: #f8dadc; }
.gain { background: #dbeee8; }
.gain.deep { background: #c8e2da; }
.loss b { color: #d4474f; }
.gain b { color: #3f907a; }
.seasonals {
    width: 100%;
}
.seasonals path,
.seasonals polyline {
    fill: none;
}
.dash {
    stroke: #cfcfd2;
    stroke-dasharray: 6 5;
}
.s-orange { stroke: #e8963c; }
.s-green { stroke: #4cb85c; }

/* right icon rail */
.rail {
    display: flex;
    flex-direction: column;
    align-items: center;
    width: 43px;
    background: #fff;
    flex: none;
}
.rail button {
    position: relative;
    display: flex;
    align-items: center;
    justify-content: center;
    width: 36px;
    height: 43px;
    flex: none;
}
.rail .active {
    height: 35px;
    margin: 5px 0 4px;
    border-radius: 6px;
    background: #ebebec;
}
.spacer {
    flex: 1;
}
.badge {
    position: absolute;
    top: 4px;
    right: 1px;
    min-width: 15px;
    padding: 0 3px;
    border-radius: 8px;
    background: #e0434d;
    color: #fff;
    font-size: 10px;
    line-height: 15px;
}
.badge.wide {
    right: 2px;
}
.rail .help {
    height: 48px;
    margin-top: 7px;
    border-top: 1px solid #e6e6e8;
}

/* pen notes */
.notes {
    position: absolute;
    top: 0;
    left: 0;
    width: 100vw;
    pointer-events: none;
}
.marker {
    fill: rgba(250, 205, 70, 0.42);
}
.pen {
    fill: #f0303f;
    font-family: "Noto Sans CJK JP", sans-serif;
    font-weight: 700;
}
.pen-1 { font-size: 32px; }
.pen-2 { font-size: 27px; }
.crayon {
    fill: none;
    stroke: #f03c4a;
    stroke-width: 7;
    stroke-linecap: round;
    stroke-linejoin: round;
    opacity: 0.85;
}
.ring {
    fill: none;
    stroke: #f43848;
    stroke-width: 5;
    stroke-linecap: round;
}
```
FILE: chart.js
```js
const NS = 'http://www.w3.org/2000/svg';

function add(parent, tag, attrs, text) {
    const el = document.createElementNS(NS, tag);
    for (const key in attrs) el.setAttribute(key, attrs[key]);
    if (text) el.textContent = text;
    parent.appendChild(el);
}

const grid = document.getElementById('grid');
const prices = document.getElementById('prices');
const days = document.getElementById('days');
const candles = document.getElementById('candles');

// price axis, 20 dollars per step; some labels are hidden by the price tags
const hidden = [4780, 4720, 4700];
for (let i = 0; i < 14; i++) {
    const price = 4940 - i * 20;
    const y = Math.round(69 + i * 45.95);
    add(grid, 'path', { d: `M0 ${y + 0.5}h885` });
    if (!hidden.includes(price)) {
        add(prices, 'text', { x: 950, y: y + 4 }, `4,${price - 4000}.000`);
    }
}

const dates = [[16, 24], [17, 134], [18, 245], [21, 355], [22, 466], [23, 576], [24, 687], [25, 802]];
dates.forEach(([day, x]) => {
    add(grid, 'path', { d: `M${x + 0.5} 37v668` });
    add(days, 'text', { x: x, y: 725 }, String(day));
});

// closes, as x,y points of the plot, one list per session
const sessions = [
    [[0,403],[3,397],[5,380],[8,362],[13,362],[15,342],[17,325],[20,334],[22,355],[24,395],[27,395],[29,365],[32,380],[36,407],[39,395],[42,385],[45,385],[47,400],[51,410],[53,392],[57,360],[60,338],[64,315],[66,320],[69,348],[73,348],[77,338],[80,332],[84,315],[88,318],[90,342],[93,352],[96,325],[99,340],[101,360],[108,360],[112,375],[114,355],[119,342],[121,353],[126,357],[128,395],[131,397],[133,417],[135,388],[137,375],[141,400],[144,424],[147,420],[150,415],[157,407],[161,416],[163,405],[170,404],[176,405],[178,463],[180,415],[185,425],[188,407],[192,405],[196,383],[199,385],[202,425],[206,415],[208,410],[211,425],[214,402],[218,405],[221,415],[225,420],[228,393],[231,355],[233,283],[235,270],[237,204],[239,220],[242,228],[246,237],[250,235],[254,240],[255,255],[259,252],[264,262],[267,265],[269,285],[271,318]],
    [[274,425],[276,438],[279,462],[281,490],[283,495],[285,470],[288,450],[289,385],[292,375],[295,393],[300,408],[303,410],[307,417],[312,420],[316,400],[320,415],[324,405],[328,410],[332,397],[337,417],[339,368],[344,382],[346,335],[349,350],[351,338],[353,380],[356,380],[358,392],[362,378],[367,373],[372,358],[376,360],[381,353],[382,345]],
    [[384,330],[386,323],[390,330],[394,345],[398,337],[402,367],[408,378],[411,405],[416,415],[422,430],[426,440],[430,425],[435,422],[441,430],[446,418],[449,425],[450,405],[453,425],[457,438],[460,442],[463,450],[465,530],[468,522],[470,525],[472,565],[476,600],[479,620],[481,628],[483,610],[485,590],[488,668],[490,600],[492,575],[495,577],[499,565],[503,528],[508,523],[510,510],[514,495],[520,478],[523,480],[526,490],[529,467],[536,466],[538,468],[543,490],[548,493],[553,493],[556,485],[561,500],[565,515],[569,505],[572,525],[575,540],[580,553],[583,558],[586,540],[590,535],[592,550],[595,520],[600,530],[604,530],[608,555],[613,557],[615,525],[618,513],[620,555],[624,570],[626,590],[628,623]]
];

// the long wicks: x, high, low, direction
const wicks = [
    [18,321,342,'down'],[26,380,421,'up'],[50,395,419,'down'],[64,304,345,'up'],[69,325,365,'down'],[74,340,362,'up'],[86,302,320,'up'],
    [127,336,425,'down'],[132,390,454,'down'],[134,362,418,'up'],[146,408,434,'up'],[175,388,412,'up'],[177,400,465,'down'],[180,402,464,'up'],
    [197,377,392,'up'],[204,412,438,'up'],[209,405,440,'down'],[236,181,310,'up'],[247,223,264,'up'],[240,195,250,'down'],[246,206,237,'down'],
    [274,403,457,'up'],[276,413,436,'down'],[281,460,537,'down'],[284,470,518,'up'],[291,358,390,'up'],[310,400,437,'up'],[317,378,405,'up'],[329,400,428,'down'],
    [341,340,390,'down'],[346,332,390,'up'],[350,330,365,'up'],[353,328,408,'down'],[359,370,407,'up'],[385,314,335,'up'],[393,320,345,'down'],
    [427,420,453,'up'],[433,405,448,'up'],[449,396,425,'up'],[456,420,482,'down'],[459,404,448,'up'],[464,440,566,'down'],[466,488,557,'up'],
    [477,570,625,'up'],[480,587,638,'down'],[488,600,692,'down'],[490,610,691,'up'],[529,456,498,'up'],[538,454,475,'down'],[553,480,515,'down'],
    [567,498,537,'up'],[569,481,505,'up'],[575,520,552,'down'],[593,506,535,'up'],[615,520,634,'up'],[617,496,530,'up'],[629,600,624,'up']
];

let seed = 7;
function rand() {
    seed = (seed * 16807) % 2147483647;
    return seed / 2147483647;
}

function drawCandle(x, open, close) {
    const dir = close < open ? 'up' : 'down';
    const top = Math.min(open, close);
    const height = Math.max(1, Math.abs(close - open));
    const high = top - rand() * 8;
    const low = top + height + rand() * 8;
    add(candles, 'path', { class: 'wick-' + dir, d: `M${x} ${high}V${low}` });
    add(candles, 'rect', { class: 'body-' + dir, x: x - 1, y: top, width: 3, height: height });
}

wicks.forEach(([x, high, low, dir]) => {
    add(candles, 'path', { class: 'wick-' + dir, d: `M${x + 0.5} ${high}V${low}` });
});

sessions.forEach(points => {
    let open = points[0][1];
    for (let i = 1; i < points.length; i++) {
        const [x0, y0] = points[i - 1];
        const [x1, y1] = points[i];
        const steps = Math.max(1, Math.round((x1 - x0) / 2.3));
        for (let k = 1; k <= steps; k++) {
            const jitter = k < steps ? (rand() - 0.5) * 10 : 0;
            const close = y0 + (y1 - y0) * k / steps + jitter;
            drawCandle(x0 + (x1 - x0) * k / steps, open, close);
            open = close;
        }
    }
});
```
